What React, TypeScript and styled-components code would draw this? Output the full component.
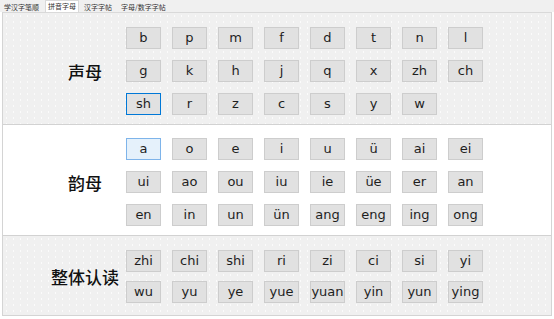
import styled, { createGlobalStyle } from 'styled-components'

const GlobalStyle = createGlobalStyle`
  html, body {
    margin: 0;
    padding: 0;
    background: #ffffff;
  }
  body {
    width: 554px;
    height: 319px;
    overflow: hidden;
    font-family: 'Noto Sans CJK SC', 'DejaVu Sans', sans-serif;
  }
`

const TabBar = styled.div`
  display: flex;
  align-items: flex-end;
  height: 12px;
  padding-left: 1px;
  background: #f0f0f0;
`

const Tab = styled.div<{ $active?: boolean }>`
  height: ${({ $active }) => ($active ? '12px' : '11px')};
  padding: 0 2px;
  margin-right: ${({ $active }) => ($active ? '2px' : '3px')};
  display: flex;
  align-items: center;
  font-size: 7px;
  line-height: 1;
  color: #333;
  background: ${({ $active }) => ($active ? '#ffffff' : '#f0f0f0')};
  border: 1px solid ${({ $active }) => ($active ? '#d9d9d9' : 'transparent')};
  border-bottom: none;
  box-sizing: border-box;
`

const Panel = styled.div`
  margin: 0 2px;
  height: 304px;
  box-sizing: border-box;
  border: 1px solid #d4d4d4;
  border-top-color: #d9d9d9;
  display: flex;
  flex-direction: column;
`

const Section = styled.section<{ $white?: boolean; $top: number; $bottom: number }>`
  display: flex;
  align-items: center;
  padding: ${({ $top, $bottom }) => `${$top}px 0 ${$bottom}px`};
  background-color: ${({ $white }) => ($white ? '#ffffff' : '#f0f0f0')};
  background-image: ${({ $white }) =>
    $white
      ? 'none'
      : 'radial-gradient(circle, rgba(255,255,255,0.7) 0.5px, transparent 0.8px)'};
  background-size: 7px 6px;
  border-bottom: 1px solid #d2d2d2;

  &:last-child {
    border-bottom: none;
    flex: 1;
  }
`

const Label = styled.div`
  width: 82px;
  margin-left: 41px;
  text-align: center;
  font-size: 17px;
  font-weight: 500;
  color: #111;
  white-space: nowrap;
`

const Keys = styled.div<{ $gap: number }>`
  display: grid;
  grid-template-columns: repeat(8, 35px);
  column-gap: 11px;
  row-gap: ${({ $gap }) => $gap}px;
`

const Key = styled.button<{ $state?: 'focus' | 'hover' }>`
  height: 22px;
  padding: 0;
  box-sizing: border-box;
  font-family: 'DejaVu Sans', sans-serif;
  font-size: 13px;
  color: #1e1e1e;
  background: ${({ $state }) => ($state === 'hover' ? '#e5f1fb' : '#e1e1e1')};
  border: 1px solid
    ${({ $state }) =>
      $state === 'focus' ? '#0078d7' : $state === 'hover' ? '#7eb4ea' : '#cdcdcd'};
  border-radius: 0;
  line-height: 20px;
`

const sections = [
  {
    label: '声母',
    white: false,
    top: 14,
    bottom: 9,
    gap: 11,
    keys: [
      'b', 'p', 'm', 'f', 'd', 't', 'n', 'l',
      'g', 'k', 'h', 'j', 'q', 'x', 'zh', 'ch',
      'sh', 'r', 'z', 'c', 's', 'y', 'w',
    ],
    focus: 'sh',
  },
  {
    label: '韵母',
    white: true,
    top: 13,
    bottom: 9,
    gap: 11,
    keys: [
      'a', 'o', 'e', 'i', 'u', 'ü', 'ai', 'ei',
      'ui', 'ao', 'ou', 'iu', 'ie', 'üe', 'er', 'an',
      'en', 'in', 'un', 'ün', 'ang', 'eng', 'ing', 'ong',
    ],
    hover: 'a',
  },
  {
    label: '整体认读',
    white: false,
    top: 14,
    bottom: 12,
    gap: 9,
    keys: [
      'zhi', 'chi', 'shi', 'ri', 'zi', 'ci', 'si', 'yi',
      'wu', 'yu', 'ye', 'yue', 'yuan', 'yin', 'yun', 'ying',
    ],
  },
]

const tabs = ['学汉字笔顺', '拼音字母', '汉字字帖', '字母/数字字帖']

export default function App() {
  return (
    <>
      <GlobalStyle />
      <TabBar>
        {tabs.map((t) => (
          <Tab key={t} $active={t === '拼音字母'}>
            {t}
          </Tab>
        ))}
      </TabBar>
      <Panel>
        {sections.map((s) => (
          <Section key={s.label} $white={s.white} $top={s.top} $bottom={s.bottom}>
            <Label>{s.label}</Label>
            <Keys $gap={s.gap}>
              {s.keys.map((k) => (
                <Key
                  key={k}
                  $state={k === s.focus ? 'focus' : k === s.hover ? 'hover' : undefined}
                >
                  {k}
                </Key>
              ))}
            </Keys>
          </Section>
        ))}
      </Panel>
    </>
  )
}
